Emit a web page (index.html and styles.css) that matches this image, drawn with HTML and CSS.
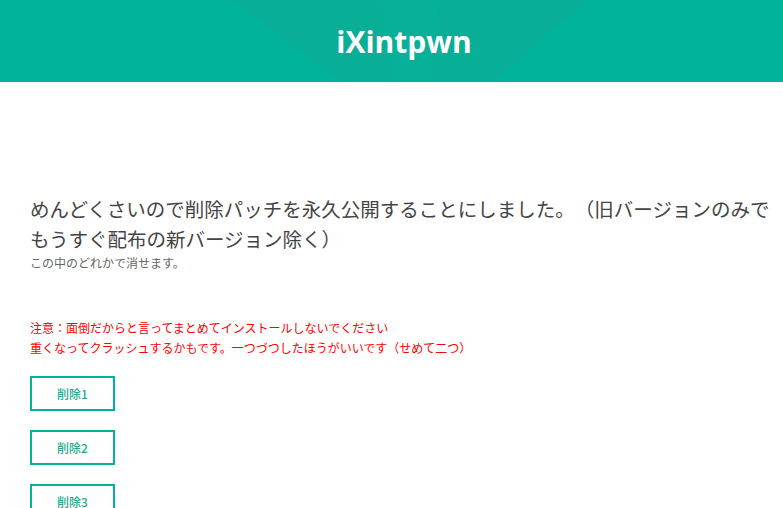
FILE: index.html
```html
<!DOCTYPE html>
<html lang="ja">
<head>
<meta charset="utf-8">
<title>iXintpwn</title>
<link rel="stylesheet" href="styles.css">
</head>
<body>
<div class="page">
  <header class="site-header">
    <svg class="rays" width="808" height="82" viewBox="0 0 808 82" preserveAspectRatio="none" aria-hidden="true">
      <polygon points="233,0 587,0 493,82 340,82" fill="#09ae97"/>
      <polygon points="380,0 440,0 430,82 395,82" fill="#07b098"/>
    </svg>
    <h1 class="site-title">iXintpwn</h1>
  </header>
  <main class="content">
    <h2 class="lead">めんどくさいので削除パッチを永久公開することにしました。（旧バージョンのみでもうすぐ配布の新バージョン除く）</h2>
    <p class="sub">この中のどれかで消せます。</p>
    <p class="warn">注意：面倒だからと言ってまとめてインストールしないでください<br>重くなってクラッシュするかもです。一つづつしたほうがいいです（せめて二つ）</p>
    <div class="buttons">
      <a class="btn" href="#">削除1</a>
      <a class="btn" href="#">削除2</a>
      <a class="btn" href="#">削除3</a>
    </div>
  </main>
</div>
</body>
</html>
```

FILE: styles.css
```css
html, body {
  margin: 0;
  padding: 0;
  overflow: hidden;
  background: #ffffff;
}
body {
  font-family: "Noto Sans CJK JP", "Noto Sans", sans-serif;
  text-spacing-trim: space-all;
}
.page {
  width: 808px;
}
.site-header {
  position: relative;
  height: 82px;
  background: #02b39b;
  display: flex;
  align-items: center;
  justify-content: center;
  overflow: hidden;
}
.rays {
  position: absolute;
  left: 0;
  top: 0;
}
.site-title {
  position: relative;
  margin: 0;
  font-family: "Open Sans", "Noto Sans", sans-serif;
  font-weight: 700;
  font-size: 30px;
  line-height: 40px;
  color: #ffffff;
  padding-top: 1px;
}
.content {
  padding: 112px 30px 0 30px;
}
.lead {
  margin: 0;
  font-weight: 400;
  font-size: 19.5px;
  line-height: 30px;
  color: #444444;
  text-spacing-trim: space-all;
}
.sub {
  margin: 1px 0 0 0;
  font-size: 12px;
  line-height: 16px;
  color: #666666;
}
.warn {
  margin: 47px 0 0 0;
  font-size: 12px;
  line-height: 20px;
  color: #ff0000;
  text-spacing-trim: space-all;
}
.buttons {
  margin-top: 18px;
  display: flex;
  flex-direction: column;
  align-items: flex-start;
  gap: 19px;
}
.btn {
  box-sizing: border-box;
  width: 85px;
  height: 35px;
  border: 2px solid #02b39b;
  display: flex;
  align-items: center;
  justify-content: center;
  font-size: 12px;
  font-weight: 500;
  color: #2aa88f;
  text-decoration: none;
}
```
